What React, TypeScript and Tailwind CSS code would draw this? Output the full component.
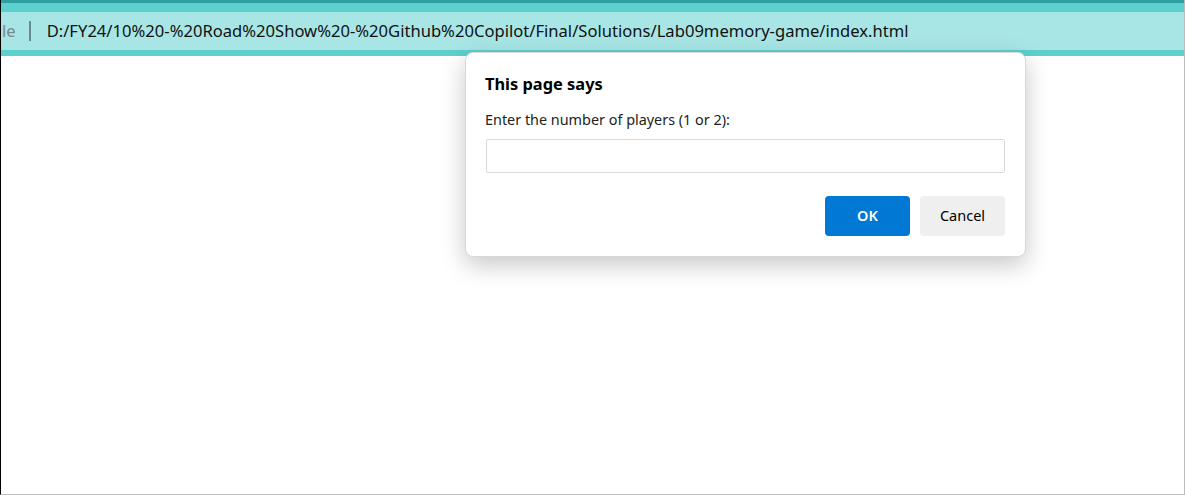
export default function App() {
  return (
    <div
      className="relative h-[495px] w-[1185px] overflow-hidden border-l border-r border-b border-l-black border-r-[#bdbdbd] border-b-[#bdbdbd] bg-white"
      style={{ fontFamily: '"Noto Sans", "Open Sans", sans-serif' }}
    >
      <div className="h-[3px] bg-[#2f9e9e]" />
      <div className="h-[9px] bg-[#5ecfcf]" />
      <div className="flex h-[38px] items-center bg-[#a8e6e6] text-[16.6px] leading-none">
        <span className="ml-[1px] text-[#7a8a8a]">le</span>
        <span className="ml-[13px] h-[20px] w-[2px] bg-[#6b8a8a]" />
        <span className="ml-[16px] text-[#111]">
          D:/FY24/10%20-%20Road%20Show%20-%20Github%20Copilot/Final/Solutions/Lab09memory-game/index.html
        </span>
      </div>
      <div className="h-[6px] bg-[#5ecfcf]" />

      <div className="absolute left-[464px] top-[52px] w-[561px] rounded-[8px] border border-[#d8d8d8] bg-white pl-[19px] pr-[20px] pt-[20px] pb-[20px] shadow-[0_8px_24px_rgba(0,0,0,0.22)]">
        <div className="text-[16.4px] font-bold leading-[22px] text-black">This page says</div>
        <div className="mt-[14px] text-[14.4px] leading-[21px] text-[#222]">
          Enter the number of players (1 or 2):
        </div>
        <div className="mt-[9px] ml-[1px] h-[34px] w-[519px] rounded-[2px] border border-[#d9d9d9] bg-white" />
        <div className="mt-[23px] flex justify-end gap-[10px]">
          <button className="h-[40px] w-[85px] rounded-[4px] bg-[#0078d4] text-[14.5px] font-semibold text-white">
            OK
          </button>
          <button className="h-[40px] w-[85px] rounded-[4px] bg-[#efefef] text-[14.5px] text-black">
            Cancel
          </button>
        </div>
      </div>
    </div>
  );
}
